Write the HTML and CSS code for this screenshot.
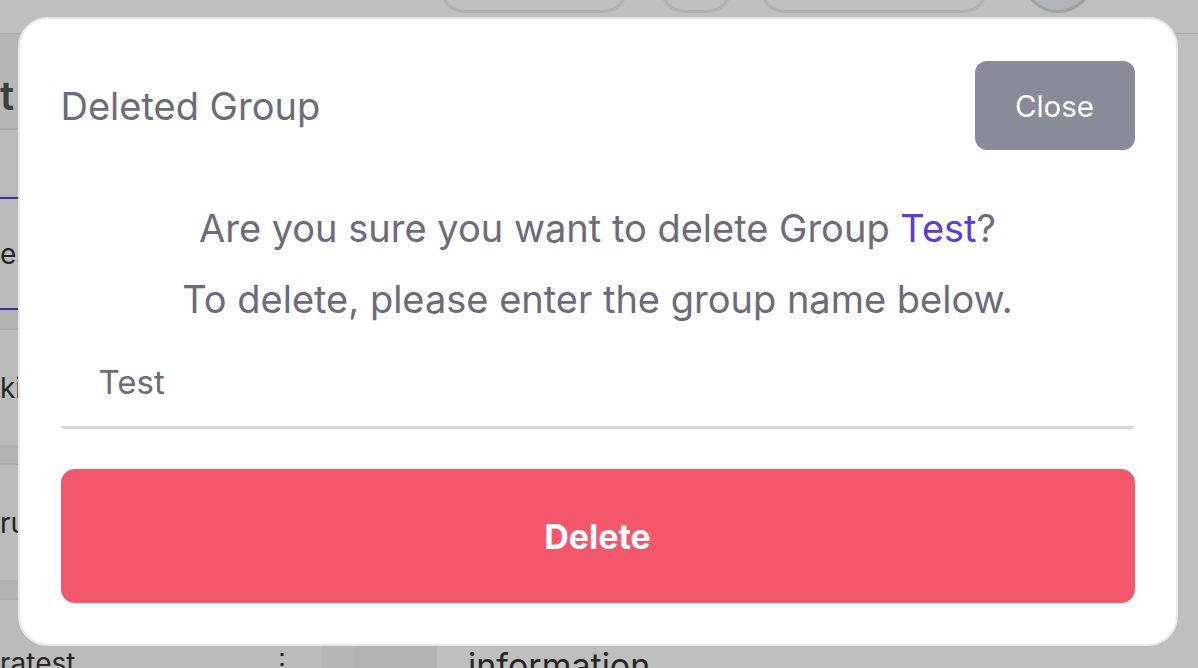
FILE: index.html
```html
<!DOCTYPE html>
<html lang="en">
<head>
<meta charset="utf-8">
<title>Deleted Group</title>
<link rel="stylesheet" href="styles.css">
</head>
<body>
<div class="app">
  <header class="topbar">
    <span class="pill pill-a"></span>
    <span class="pill pill-round"></span>
    <span class="pill pill-b"></span>
    <span class="avatar"></span>
  </header>
  <div class="main">
    <aside class="sidebar">
      <div class="side-head">t</div>
      <div class="side-gap big"></div>
      <div class="side-tab">es</div>
      <div class="side-gap"></div>
      <div class="side-item">ki</div>
      <div class="side-gap"></div>
      <div class="side-item">ru</div>
      <div class="side-gap"></div>
      <div class="side-item last"><span>ratest</span><span class="kebab">⋮</span></div>
    </aside>
    <div class="divider"></div>
    <section class="content">
      <p class="info">information.</p>
    </section>
  </div>
</div>

<div class="overlay">
  <div class="modal">
    <div class="modal-head">
      <h2 class="modal-title">Deleted Group</h2>
      <button class="btn-close">Close</button>
    </div>
    <p class="line line-1">Are you sure you want to delete Group <span class="accent">Test</span>?</p>
    <p class="line line-2">To delete, please enter the group name below.</p>
    <input class="name-input" type="text" value="Test">
    <button class="btn-delete">Delete</button>
  </div>
</div>
</body>
</html>
```

FILE: styles.css
```css
* { box-sizing: border-box; }
html, body { margin: 0; padding: 0; height: 100%; }
body {
  font-family: Inter, "Noto Sans", "Liberation Sans", sans-serif;
  background: #ffffff;
  color: #4a4a5a;
  overflow: hidden;
}

/* background app */
.app { width: 1198px; height: 668px; display: flex; flex-direction: column; }
.topbar {
  height: 34px;
  flex: none;
  display: flex;
  align-items: flex-end;
  padding-left: 440px;
  border-bottom: 1px solid #e2e2e2;
}
.pill {
  height: 50px;
  margin-bottom: 20px;
  border: 3px solid #ececec;
  border-radius: 30px;
  flex: none;
}
.pill-a { width: 188px; margin-right: 32px; }
.pill-round { width: 72px; margin-right: 28px; }
.pill-b { width: 228px; margin-right: 35px; }
.avatar {
  width: 70px; height: 66px; margin-bottom: 20px;
  border-radius: 50%; border: 3px solid #d8d8dc; background: #eef0f4;
  flex: none;
}
.main { flex: 1; display: flex; }
.sidebar { width: 322px; display: flex; flex-direction: column; background: #f5f5f5; }
.side-head { height: 96px; display: flex; align-items: flex-end; padding-bottom: 8px; font-size: 40px; font-weight: 600; color: #555; border-bottom: 2px solid #e3e3e3; }
.side-gap { height: 20px; background: #eeeeee; border-bottom: 2px solid #e6e6e6; flex: none; }
.side-gap.big { height: 67px; background: #f7f7f7; border-bottom: none; }
.side-tab { height: 113px; display: flex; align-items: center; font-size: 28px; color: #333; border-top: 2px solid #5b3cdb; border-bottom: 2px solid #5b3cdb; background: #fafafa; }
.side-item { height: 115px; display: flex; align-items: center; font-size: 28px; color: #333; background: #fafafa; }
.side-item.last { flex: 1; height: auto; align-items: flex-end; justify-content: space-between; padding-right: 26px; margin-bottom: -12px; }
.kebab { font-size: 28px; color: #333; }
.divider { width: 115px; background: #efefef; border-left: 32px solid #f3f3f3; }
.content { flex: 1; display: flex; align-items: flex-end; padding-left: 31px; }
.info { margin: 0 0 -18px 0; font-size: 34px; color: #333; }

/* overlay */
.overlay {
  position: fixed;
  inset: 0;
  background: rgba(0, 0, 0, 0.25);
  display: flex;
  align-items: center;
  justify-content: center;
  padding: 0 3px 5px 0;
}
.modal {
  width: 1160px;
  background: #ffffff;
  border: 2px solid #e8e8e8;
  border-radius: 30px;
  padding: 42px 41px 41px 41px;
  display: flex;
  flex-direction: column;
}
.modal-head {
  display: flex;
  align-items: center;
  justify-content: space-between;
}
.modal-title {
  margin: 0;
  font-size: 38px;
  font-weight: 400;
  color: #6b6b7b;
}
.btn-close {
  width: 160px;
  height: 89px;
  border: none;
  border-radius: 12px;
  background: #8a8b99;
  color: #ffffff;
  font-family: inherit;
  font-size: 29.5px;
}
.line {
  margin: 0;
  text-align: center;
  font-size: 38px;
  color: #6b6b7b;
  line-height: 71px;
}
.line-1 { margin-top: 43px; }
.accent { color: #5b3cdb; }
.name-input {
  margin-top: 5px;
  height: 89px;
  width: 100%;
  border: none;
  border-bottom: 3px solid #d6d6e0;
  border-radius: 0 0 4px 4px;
  padding: 0 0 3px 38px;
  font-family: inherit;
  font-size: 33px;
  color: #6b6b7b;
  background: #ffffff;
  outline: none;
}
.btn-delete {
  margin-top: 40px;
  height: 134px;
  width: 100%;
  border: none;
  border-radius: 14px;
  background: #f2576b;
  color: #ffffff;
  font-family: inherit;
  font-size: 34px;
  font-weight: 700;
}
```
